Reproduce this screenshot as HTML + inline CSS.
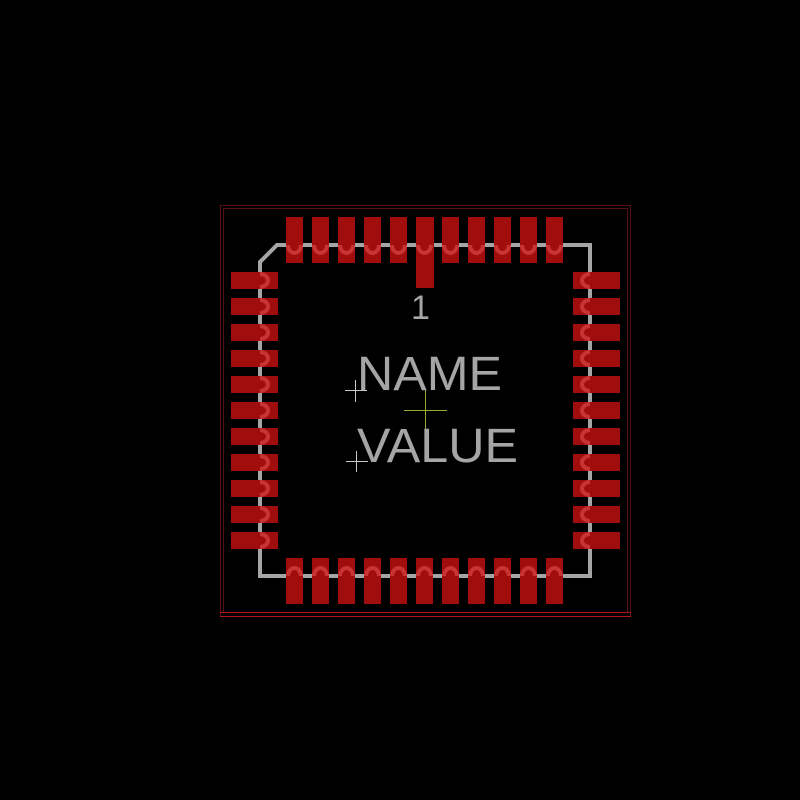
<!DOCTYPE html>
<html><head><meta charset="utf-8"><style>
html,body{margin:0;padding:0;background:#000;width:800px;height:800px;overflow:hidden}
svg{display:block}
text{font-family:"Liberation Sans",sans-serif;fill:#a5a5a5}
</style></head><body>
<svg width="800" height="800" viewBox="0 0 800 800" xmlns="http://www.w3.org/2000/svg">
<rect width="800" height="800" fill="#000"/>
<g fill="none" stroke-width="1">
<path d="M220.5 616 V205.5 H630.5 V616" stroke="#5a1010"/>
<path d="M223.5 613 V208.5 H627.5 V613" stroke="#5a1010"/>
<line x1="220" y1="612.5" x2="631" y2="612.5" stroke="#b01414"/>
<line x1="220" y1="616.5" x2="631" y2="616.5" stroke="#b01414"/>
</g>
<path d="M277 245 H590 V576 H260 V262 Z" fill="none" stroke="#a5a5a5" stroke-width="4"/>
<g fill="#a00d0d">
<rect x="286" y="217" width="17" height="46"/><rect x="312" y="217" width="17" height="46"/><rect x="338" y="217" width="17" height="46"/><rect x="364" y="217" width="17" height="46"/><rect x="390" y="217" width="17" height="46"/><rect x="416" y="217" width="18" height="71"/><rect x="442" y="217" width="17" height="46"/><rect x="468" y="217" width="17" height="46"/><rect x="494" y="217" width="17" height="46"/><rect x="520" y="217" width="17" height="46"/><rect x="546" y="217" width="17" height="46"/>
<rect x="286" y="558" width="17" height="46"/><rect x="312" y="558" width="17" height="46"/><rect x="338" y="558" width="17" height="46"/><rect x="364" y="558" width="17" height="46"/><rect x="390" y="558" width="17" height="46"/><rect x="416" y="558" width="17" height="46"/><rect x="442" y="558" width="17" height="46"/><rect x="468" y="558" width="17" height="46"/><rect x="494" y="558" width="17" height="46"/><rect x="520" y="558" width="17" height="46"/><rect x="546" y="558" width="17" height="46"/>
<rect x="231" y="272" width="47" height="17"/><rect x="231" y="298" width="47" height="17"/><rect x="231" y="324" width="47" height="17"/><rect x="231" y="350" width="47" height="17"/><rect x="231" y="376" width="47" height="17"/><rect x="231" y="402" width="47" height="17"/><rect x="231" y="428" width="47" height="17"/><rect x="231" y="454" width="47" height="17"/><rect x="231" y="480" width="47" height="17"/><rect x="231" y="506" width="47" height="17"/><rect x="231" y="532" width="47" height="17"/>
<rect x="573" y="272" width="47" height="17"/><rect x="573" y="298" width="47" height="17"/><rect x="573" y="324" width="47" height="17"/><rect x="573" y="350" width="47" height="17"/><rect x="573" y="376" width="47" height="17"/><rect x="573" y="402" width="47" height="17"/><rect x="573" y="428" width="47" height="17"/><rect x="573" y="454" width="47" height="17"/><rect x="573" y="480" width="47" height="17"/><rect x="573" y="506" width="47" height="17"/><rect x="573" y="532" width="47" height="17"/>
</g>
<g fill="none" stroke="#c83434" stroke-width="4">
<path d="M288 245 a6.5 8 0 0 0 13 0 M314 245 a6.5 8 0 0 0 13 0 M340 245 a6.5 8 0 0 0 13 0 M366 245 a6.5 8 0 0 0 13 0 M392 245 a6.5 8 0 0 0 13 0 M418 245 a6.5 8 0 0 0 13 0 M444 245 a6.5 8 0 0 0 13 0 M470 245 a6.5 8 0 0 0 13 0 M496 245 a6.5 8 0 0 0 13 0 M522 245 a6.5 8 0 0 0 13 0 M548 245 a6.5 8 0 0 0 13 0"/>
<path d="M288 576 a6.5 8 0 0 1 13 0 M314 576 a6.5 8 0 0 1 13 0 M340 576 a6.5 8 0 0 1 13 0 M366 576 a6.5 8 0 0 1 13 0 M392 576 a6.5 8 0 0 1 13 0 M418 576 a6.5 8 0 0 1 13 0 M444 576 a6.5 8 0 0 1 13 0 M470 576 a6.5 8 0 0 1 13 0 M496 576 a6.5 8 0 0 1 13 0 M522 576 a6.5 8 0 0 1 13 0 M548 576 a6.5 8 0 0 1 13 0"/>
<path d="M260 274 a8 6.5 0 0 1 0 13 M260 300 a8 6.5 0 0 1 0 13 M260 326 a8 6.5 0 0 1 0 13 M260 352 a8 6.5 0 0 1 0 13 M260 378 a8 6.5 0 0 1 0 13 M260 404 a8 6.5 0 0 1 0 13 M260 430 a8 6.5 0 0 1 0 13 M260 456 a8 6.5 0 0 1 0 13 M260 482 a8 6.5 0 0 1 0 13 M260 508 a8 6.5 0 0 1 0 13 M260 534 a8 6.5 0 0 1 0 13"/>
<path d="M590 274 a8 6.5 0 0 0 0 13 M590 300 a8 6.5 0 0 0 0 13 M590 326 a8 6.5 0 0 0 0 13 M590 352 a8 6.5 0 0 0 0 13 M590 378 a8 6.5 0 0 0 0 13 M590 404 a8 6.5 0 0 0 0 13 M590 430 a8 6.5 0 0 0 0 13 M590 456 a8 6.5 0 0 0 0 13 M590 482 a8 6.5 0 0 0 0 13 M590 508 a8 6.5 0 0 0 0 13 M590 534 a8 6.5 0 0 0 0 13"/>
</g>
<g stroke="#c8c8c8" stroke-width="1">
<path d="M345 390.5 H367 M355.5 380 V402"/>
<path d="M346 461.5 H368 M356.5 451 V472"/>
</g>
<path d="M404 410.5 H447 M425.5 389 V432" stroke="#9aac32" stroke-width="1"/>
<text x="411" y="319" font-size="34">1</text>
<text x="357" y="390" font-size="48" textLength="145" lengthAdjust="spacingAndGlyphs">NAME</text>
<text x="357" y="462" font-size="48" textLength="161" lengthAdjust="spacingAndGlyphs">VALUE</text>
</svg>
</body></html>
